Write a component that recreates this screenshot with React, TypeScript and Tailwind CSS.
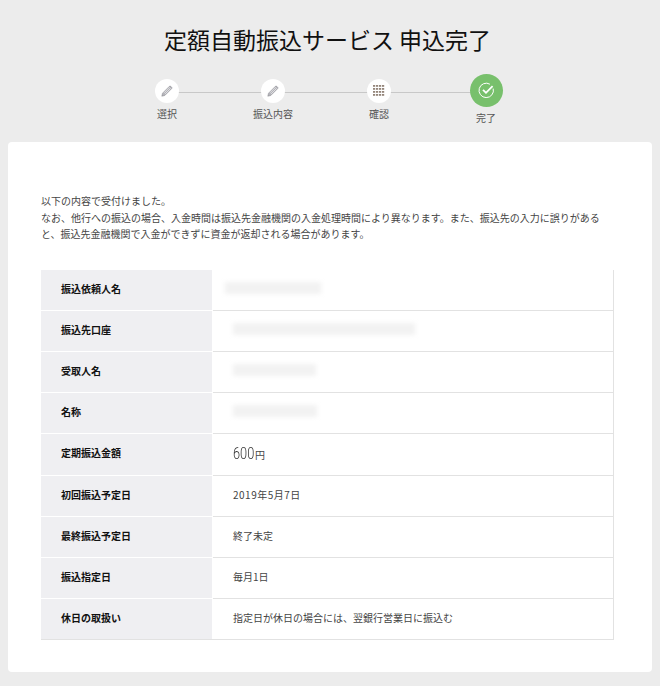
const font = "font-['Noto_Sans_CJK_JP','Noto_Sans',sans-serif]"

function Pencil() {
    return (
        <svg width="12" height="12" viewBox="0 0 12 12" fill="none">
            <path d="M.8 11.2l.7-3L8.4 1.3a.9.9 0 0 1 1.3 0l1 1a.9.9 0 0 1 0 1.3L3.8 10.5l-3 .7z" fill="#b4b4ba" stroke="#85858a" strokeWidth="0.5" />
            <path d="M3 7.8L8.6 2.2M4.1 8.9L9.7 3.3" stroke="#fff" strokeWidth="0.6" />
        </svg>
    )
}

function Dots() {
    const cells = []
    for (let y = 0; y < 4; y++) {
        for (let x = 0; x < 4; x++) {
            cells.push(<rect key={x + "-" + y} x={x * 3} y={y * 3} width="2.2" height="1.8" fill="#94857a" />)
        }
    }
    return <svg width="12" height="12" viewBox="0 0 12 12">{cells}</svg>
}

function Check() {
    return (
        <svg width="17" height="17" viewBox="0 0 17 17" fill="none" stroke="#fff">
            <path d="M15.2 6.6A7.2 7.2 0 1 1 11.9 2.2" strokeWidth="1" />
            <path d="M5 7.8l3 3 6.6-6.6" strokeWidth="1.8" />
        </svg>
    )
}

function Step({icon, label, last}: {icon: React.ReactNode; label: string; last?: boolean}) {
    return (
        <div className={"relative w-[106px] flex flex-col items-center " + (last ? "ml-[1px]" : "")}>
            {!last && <div className="absolute left-[53px] top-[17.5px] w-[106px] h-px bg-[#c8c8c8]" />}
            <div className="h-[33px] flex items-center justify-center relative">
                {last
                    ? <div className="w-[33px] h-[33px] rounded-full bg-[#78c06c] flex items-center justify-center">{icon}</div>
                    : <div className="w-6 h-6 rounded-full bg-white flex items-center justify-center">{icon}</div>}
            </div>
            <div className={"text-[10px] leading-[14px] text-[#555] " + (last ? "mt-[4px]" : "mt-0")}>{label}</div>
        </div>
    )
}

function Blur({w, ml = 0}: {w: string; ml?: number}) {
    return <div className={w + " h-[12px] bg-[#f2f2f2] blur-[2px] " + (ml ? "-ml-[8px]" : "")} />
}

function Row({label, children, tall, last}: {label: string; children: React.ReactNode; tall?: boolean; last?: boolean}) {
    return (
        <div className={"flex " + (tall ? "h-[42px]" : "h-[41px]")}>
            <div className={"w-[171px] shrink-0 bg-[#efeff2] pl-5 pb-[4px] flex items-center text-[10px] font-bold text-[#111] border-b " + (last ? "border-[#e2e2e2]" : "border-white")}>{label}</div>
            <div className={"w-px shrink-0 border-b " + (last ? "border-[#e2e2e2]" : "border-white")} />
            <div className="flex-1 border-r border-b border-[#e2e2e2] pl-5 pb-[4px] flex items-center text-[10px] text-[#444]">{children}</div>
        </div>
    )
}

export default function App() {
    return (
        <div className={"min-h-[686px] bg-[#ececec] px-2 pb-[14px] " + font}>
            <h1 className="pt-[23px] pr-[5px] h-[74px] text-center text-[23px] leading-[33px] text-[#111] font-normal">定額自動振込サービス 申込完了</h1>
            <div className="flex pl-[106px] h-[68px]">
                <Step icon={<Pencil />} label="選択" />
                <Step icon={<Pencil />} label="振込内容" />
                <Step icon={<Dots />} label="確認" />
                <Step icon={<Check />} label="完了" last />
            </div>
            <div className="bg-white rounded-[4px] h-[530px] pt-[51px] px-[33px]">
                <p className="text-[10px] leading-[16.5px] text-[#444] w-[570px]">
                    以下の内容で受付けました。<br />
                    なお、他行への振込の場合、入金時間は振込先金融機関の入金処理時間により異なります。また、振込先の入力に誤りがあると、振込先金融機関で入金ができずに資金が返却される場合があります。
                </p>
                <div className="mt-[27.5px] w-[573px]">
                    <Row label="振込依頼人名"><Blur w="w-[96px]" ml={1} /></Row>
                    <Row label="振込先口座"><Blur w="w-[182px]" /></Row>
                    <Row label="受取人名"><Blur w="w-[83px]" /></Row>
                    <Row label="名称"><Blur w="w-[84px]" /></Row>
                    <Row label="定期振込金額" tall>
                        <span className="inline-block w-[20px] mt-[2px] text-[17px] leading-none font-['Roboto',sans-serif] font-light text-[#333] scale-x-[0.75] origin-left">600</span>
                        <span className="ml-[2px] mt-[4px]">円</span>
                    </Row>
                    <Row label="初回振込予定日"><span className="tracking-[0.5px]">2019年5月7日</span></Row>
                    <Row label="最終振込予定日">終了未定</Row>
                    <Row label="振込指定日">毎月1日</Row>
                    <Row label="休日の取扱い" last>指定日が休日の場合には、翌銀行営業日に振込む</Row>
                </div>
            </div>
        </div>
    )
}
